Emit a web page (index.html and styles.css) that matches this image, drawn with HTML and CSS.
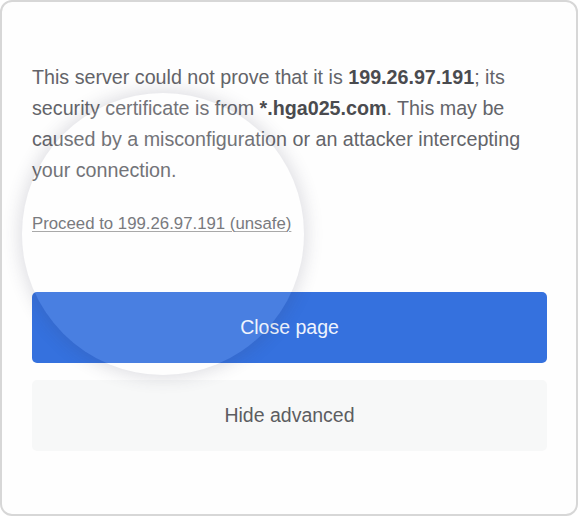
FILE: index.html
```html
<!DOCTYPE html>
<html lang="en">
<head>
<meta charset="utf-8">
<link rel="stylesheet" href="styles.css">
</head>
<body>
<div class="card">
  <p class="message">This server could not prove that it is <strong>199.26.97.191</strong>; its security certificate is from <strong>*.hga025.com</strong>. This may be caused by a misconfiguration or an attacker intercepting your connection.</p>
  <a class="proceed" href="#">Proceed to 199.26.97.191 (unsafe)</a>
  <div class="actions">
    <button class="btn btn-primary">Close page</button>
    <button class="btn btn-secondary">Hide advanced</button>
  </div>
  <div class="magnifier"></div>
</div>
</body>
</html>
```
FILE: styles.css
```css
html, body {
  margin: 0;
  padding: 0;
  background: #ffffff;
}
body {
  width: 580px;
  height: 516px;
  overflow: hidden;
  font-family: "Liberation Sans", Arial, sans-serif;
}
.card {
  position: relative;
  box-sizing: border-box;
  width: 578px;
  height: 516px;
  border: 2px solid #d7d7d7;
  border-radius: 12px;
  background: #fefefe;
  padding: 60px 29px 0 30px;
  overflow: hidden;
}
.message {
  margin: 0;
  font-size: 19.7px;
  line-height: 31px;
  color: #636469;
}
.message strong {
  color: #4a4b4f;
  font-weight: bold;
}
.proceed {
  display: inline-block;
  margin-top: 27px;
  font-size: 16.8px;
  line-height: 22px;
  color: #6a6b70;
  text-decoration: underline;
  text-decoration-color: #a0a0a0;
  text-decoration-thickness: 1px;
  text-underline-offset: 2px;
}
.actions {
  display: flex;
  flex-direction: column;
  gap: 17px;
  margin-top: 57px;
}
.btn {
  height: 71px;
  border: 0;
  border-radius: 5px;
  font-family: "Liberation Sans", Arial, sans-serif;
  font-size: 19.5px;
  cursor: pointer;
}
.btn-primary {
  background: #3571de;
  color: #eef3fd;
}
.btn-secondary {
  background: #f7f8f8;
  color: #5c5d61;
}
.magnifier {
  position: absolute;
  left: 20px;
  top: 91px;
  width: 282px;
  height: 282px;
  border-radius: 50%;
  background: rgba(255, 255, 255, 0.1);
  box-shadow: 0 0 16px 4px rgba(60, 60, 90, 0.15);
  pointer-events: none;
}
```
